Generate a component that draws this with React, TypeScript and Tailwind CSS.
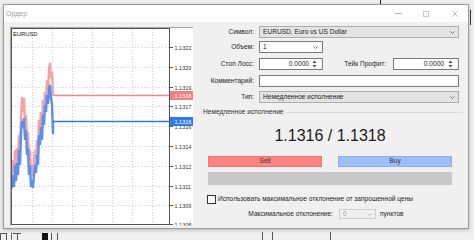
import React from "react";

// price grid of the tick chart (page coordinates, the svg uses them directly)
const grid = [
  { y: 47, t: "1.1322" },
  { y: 67, t: "1.1320" },
  { y: 87, t: "1.1319" },
  { y: 106, t: "1.1317" },
  { y: 126, t: "1.1316" },
  { y: 146, t: "1.1314" },
  { y: 166, t: "1.1312" },
  { y: 186, t: "1.1311" },
  { y: 205, t: "1.1309" },
  { y: 224, t: "1.1308" },
];

const ask =
  "12,175 13,160 14,172 15,150 16,166 17,148 18,160 19,135 20,150 21,118 22,97 23,112 24,98 25,125 26,115 27,140 28,132 29,160 30,150 31,172 32,165 33,176 34,160 35,150 36,158 37,140 38,150 39,120 40,130 41,112 42,125 43,100 44,112 45,92 46,100 47,80 48,90 49,70 50,63 51,78 52,72 53,95";
const bid =
  "12,188 13,175 14,187 15,165 16,181 17,163 18,175 19,150 20,165 21,133 22,121 23,128 24,118 25,140 26,130 27,155 28,148 29,175 30,165 31,187 32,180 33,188 34,175 35,165 36,173 37,155 38,165 39,135 40,145 41,127 42,140 43,115 44,125 45,105 46,112 47,95 48,104 49,88 50,85 51,98 52,104 53,134 53,121";

function Chart() {
  return (
    <svg width="183" height="199" viewBox="10 27 183 199" className="block" fontFamily="Liberation Sans, Arial, sans-serif">
      <rect x="10" y="27" width="183" height="199" fill="#ffffff" />
      <path d="M10.5 226V27.5H193" stroke="#a8a8a8" fill="none" />
      {[32, 52, 72, 92, 112, 132, 152].map((x) => (
        <line key={x} x1={x + 0.5} y1="29" x2={x + 0.5} y2="225" stroke="#cdcdcd" strokeDasharray="1 2" />
      ))}
      {grid.map((g) => (
        <line key={g.y} x1="12" y1={g.y + 0.5} x2="170" y2={g.y + 0.5} stroke="#cdcdcd" strokeDasharray="1 2" />
      ))}
      <polyline points={ask} fill="none" stroke="#f4a2a2" strokeWidth="2.4" strokeLinejoin="bevel" />
      <polyline points={bid} fill="none" stroke="#5a8eef" strokeWidth="2.4" strokeLinejoin="bevel" />
      <line x1="53" y1="95.5" x2="170" y2="95.5" stroke="#f48686" strokeWidth="1.3" />
      <line x1="53" y1="121.5" x2="170" y2="121.5" stroke="#2f7ae6" strokeWidth="1.3" />
      <rect x="11.5" y="28.5" width="158" height="196" fill="none" stroke="#555555" />
      {grid.map((g) => (
        <g key={g.t + g.y}>
          <line x1="170" y1={g.y + 0.5} x2="173" y2={g.y + 0.5} stroke="#555555" />
          <text x="174.5" y={g.y + 2.5} fontSize="5.5" fill="#333333">
            {g.t}
          </text>
        </g>
      ))}
      <rect x="170" y="91" width="23" height="9" fill="#f27f7f" />
      <text x="174.5" y="97.5" fontSize="5.5" fill="#ffffff">
        1.1318
      </text>
      <rect x="170" y="117" width="23" height="9" fill="#2f7de6" />
      <text x="174.5" y="123.5" fontSize="5.5" fill="#ffffff">
        1.1316
      </text>
      <text x="13" y="35.5" fontSize="5.8" fill="#111111">
        EURUSD
      </text>
    </svg>
  );
}

function Chevron({ color = "#5a5a5a" }: { color?: string }) {
  return (
    <svg width="5" height="3" viewBox="0 0 5 3" className="shrink-0">
      <path d="M0.4 0.4L2.5 2.5L4.6 0.4" fill="none" stroke={color} strokeWidth="0.8" />
    </svg>
  );
}

function Spin() {
  return (
    <svg width="5" height="8" viewBox="0 0 5 8" className="shrink-0">
      <path d="M2.5 0.6L4.5 3H0.5Z M0.5 5H4.5L2.5 7.4Z" fill="#4a4a4a" />
    </svg>
  );
}

function Label({ children, w }: { children: React.ReactNode; w: string }) {
  return <div className={`${w} shrink-0 text-right whitespace-nowrap`}>{children}</div>;
}

export default function App() {
  return (
    <div className="w-[474px] h-[240px] overflow-hidden bg-[#f0f0f0] flex flex-col font-['Liberation_Sans',Arial,sans-serif] text-[6.6px] leading-none text-[#1e1e1e]">
      {/* app behind the dialog, top edge */}
      <div className="h-[4px] shrink-0 flex">
        <div className="ml-[380px] w-px bg-[#222]" />
      </div>

      <div className="h-[225px] shrink-0 flex">
        {/* dialog window */}
        <div className="ml-[3px] w-[466px] h-full border border-[#9c9c9c] bg-[#f0f0f0] flex flex-col shadow-[0_1px_4px_rgba(0,0,0,0.25)]">
          <div className="h-[17px] shrink-0 bg-white flex items-center">
            <span className="ml-[2px] text-[7px] text-[#9d9d9d]">Ордер</span>
            <div className="ml-auto mr-[10px] flex items-center">
              <div className="w-[7px] h-px bg-[#b5b5b5]" />
              <div className="ml-[21px] w-[6px] h-[6px] border border-[#c8c8c8]" />
              <svg width="6" height="6" viewBox="0 0 6 6" className="ml-[23px]">
                <path d="M0.3 0.3L5.7 5.7M5.7 0.3L0.3 5.7" stroke="#a8a8a8" strokeWidth="0.8" />
              </svg>
            </div>
          </div>

          <div className="flex-1 flex">
            <div className="ml-[6px] mt-[5px] w-[183px] h-[199px] shrink-0">
              <Chart />
            </div>

            {/* order form */}
            <div className="pl-[7px] flex flex-col">
              <div className="mt-[4px] h-[12px] flex items-center">
                <Label w="w-[54px]">Символ:</Label>
                <div className="ml-[5px] w-[200px] h-full border border-[#adadad] bg-[#e3e3e3] flex items-center pl-[3px] pr-[3px]">
                  <span className="flex-1">EURUSD, Euro vs US Dollar</span>
                  <Chevron />
                </div>
              </div>

              <div className="mt-[3px] h-[12px] flex items-center">
                <Label w="w-[54px]">Объем:</Label>
                <div className="ml-[5px] w-[64px] h-full border border-[#7a7a7a] bg-white flex items-center pl-[3px] pr-[4px]">
                  <span className="flex-1">1</span>
                  <Chevron />
                </div>
              </div>

              <div className="mt-[5px] h-[12px] flex items-center">
                <Label w="w-[54px]">Стоп Лосс:</Label>
                <div className="ml-[5px] w-[64px] h-full border border-[#7a7a7a] bg-white flex items-center pr-[5px]">
                  <span className="flex-1 text-right">0.0000</span>
                  <div className="ml-[3px] flex">
                    <Spin />
                  </div>
                </div>
                <Label w="w-[63px]">Тейк Профит:</Label>
                <div className="ml-[7px] w-[66px] h-full border border-[#7a7a7a] bg-white flex items-center pr-[5px]">
                  <span className="flex-1 text-right">0.0000</span>
                  <div className="ml-[4px] flex">
                    <Spin />
                  </div>
                </div>
              </div>

              <div className="mt-[5px] h-[12px] flex items-center">
                <Label w="w-[54px]">Комментарий:</Label>
                <div className="ml-[5px] w-[200px] h-full border border-[#7a7a7a] bg-white" />
              </div>

              <div className="mt-[4px] h-[12px] flex items-center">
                <Label w="w-[54px]">Тип:</Label>
                <div className="ml-[5px] w-[200px] h-full border border-[#adadad] bg-[#e3e3e3] flex items-center pl-[3px] pr-[3px]">
                  <span className="flex-1">Немедленное исполнение</span>
                  <Chevron />
                </div>
              </div>

              {/* group: instant execution */}
              <div className="mt-[4px] h-[10px] ml-[1px] w-[262px] flex items-center">
                <div className="w-[1px] h-px bg-[#dcdcdc]" />
                <span className="px-px text-[#333]">Немедленное исполнение</span>
                <div className="flex-1 h-px bg-[#dcdcdc]" />
              </div>

              <div className="ml-[8px] w-[244px] flex flex-col">
                <div className="mt-[10px] h-[18px] flex items-center justify-center text-[16px] text-[#1a1a1a]">
                  1.1316 / 1.1318
                </div>
                <div className="mt-[11px] h-[11px] flex justify-between">
                  <div className="w-[114px] h-full bg-[#ff8383] border border-[#ea7474] flex items-center justify-center text-[#333]">
                    Sell
                  </div>
                  <div className="w-[114px] h-full bg-[#9fbdf8] border border-[#8eaeee] flex items-center justify-center text-[#333]">
                    Buy
                  </div>
                </div>
                <div className="mt-[5px] h-[13px] bg-[#c8c8c8]" />
                <div className="mt-[10px] h-[9px] -ml-px flex items-center">
                  <div className="w-[9px] h-[9px] border border-[#333] bg-white shrink-0" />
                  <span className="ml-[2px] whitespace-nowrap">Использовать максимальное отклонение от запрошенной цены</span>
                </div>
                <div className="mt-[5px] h-[10px] flex items-center">
                  <Label w="w-[125px]">Максимальное отклонение:</Label>
                  <div className="ml-[6px] w-[37px] h-full border border-[#cccccc] bg-[#f0f0f0] flex items-center pl-[3px] pr-[3px]">
                    <span className="flex-1 text-[#9a9a9a]">0</span>
                    <Chevron color="#b0b0b0" />
                  </div>
                  <span className="ml-[4px]">пунктов</span>
                </div>
              </div>
            </div>
          </div>
        </div>

        {/* app behind, right edge */}
        <div className="flex-1 pt-[6px] pl-px">
          <div className="w-px h-[15px] bg-[#333]" />
        </div>
      </div>

      {/* app toolbar peeking under the dialog */}
      <div className="flex-1 flex items-end">
        <div className="w-[7px] h-[7px] border border-[#555] border-b-0" />
        <div className="ml-[4px] w-px h-[7px] bg-[#666]" />
        <div className="ml-px w-[8px] h-[7px] flex flex-col items-center">
          <div className="w-full h-px bg-[#555]" />
          <div className="w-px flex-1 bg-[#555]" />
        </div>
        <div className="ml-[21px] w-[6px] h-[7px] bg-[#111]" />
        <div className="ml-[3px] w-px h-[7px] bg-[#555]" />
        <div className="ml-[5px] w-px h-[7px] bg-[#555]" />
        <div className="ml-[204px] w-px h-[8px] bg-[#555]" />
        <div className="ml-[9px] w-px h-[8px] bg-[#555]" />
        <div className="ml-[57px] w-px h-[8px] bg-[#555]" />
      </div>
    </div>
  );
}
